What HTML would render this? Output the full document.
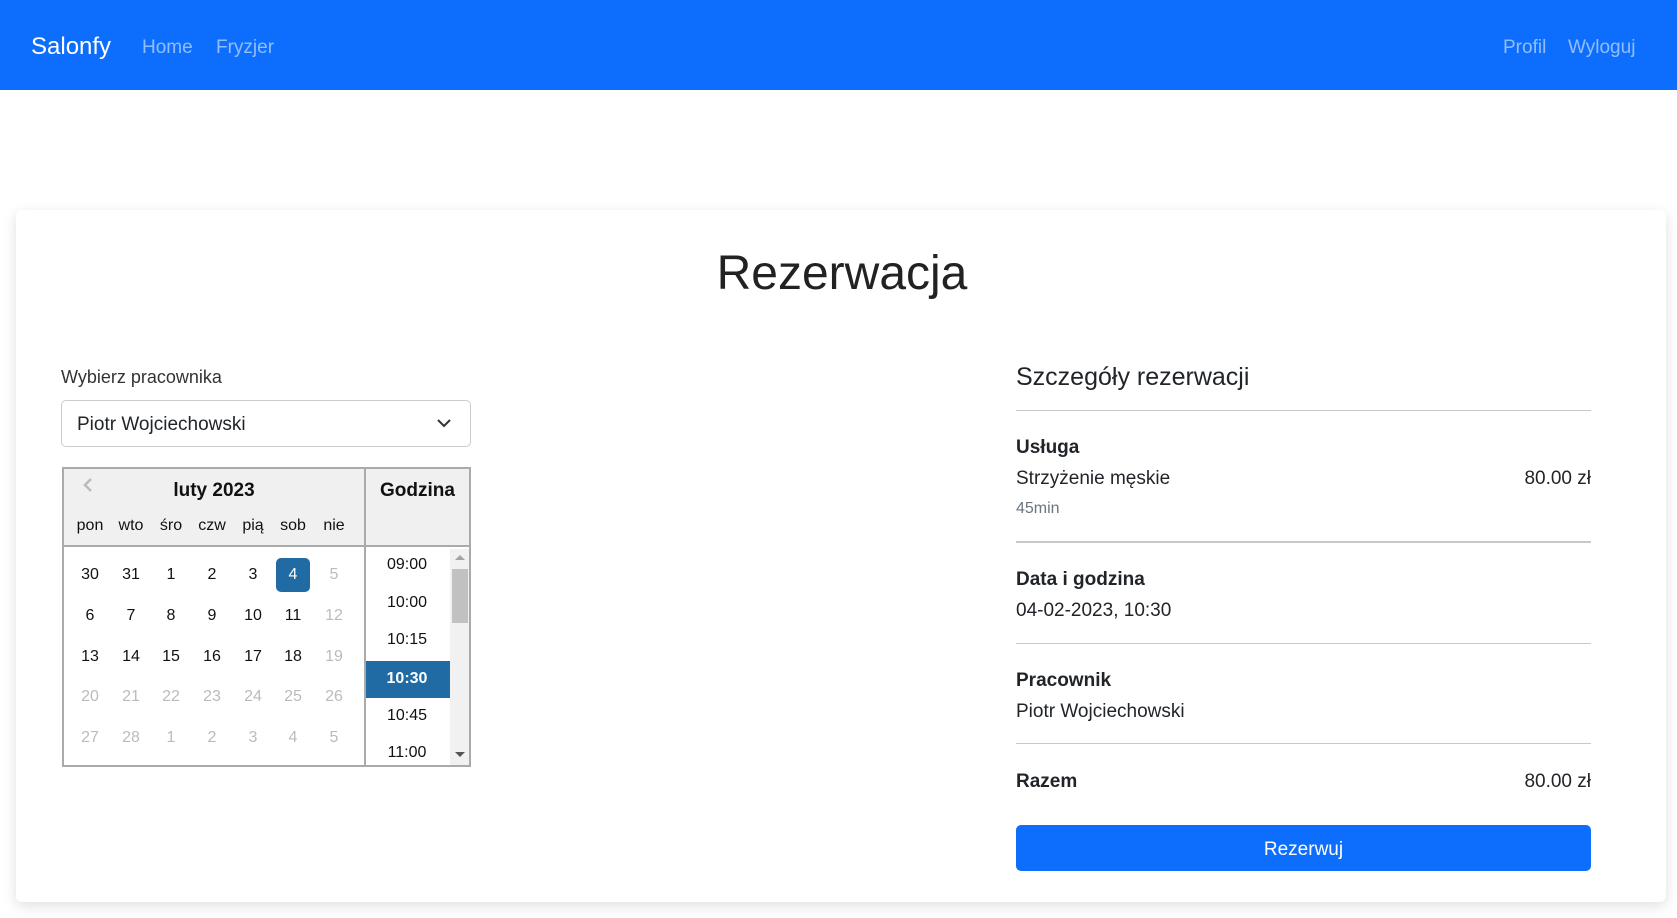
<!DOCTYPE html>
<html><head><meta charset="utf-8"><style>
*{box-sizing:border-box;margin:0;padding:0}
body{width:1677px;height:918px;background:#fff;font-family:"Liberation Sans",Arial,sans-serif;color:#212529;position:relative;overflow:hidden}
.a{position:absolute;white-space:nowrap}
nav{position:absolute;left:0;top:0;width:1677px;height:90px;background:#0d6efd}
.nl{color:rgba(255,255,255,.55);font-size:19px;top:35px;line-height:26px}
.card{position:absolute;left:16px;top:210px;width:1650px;height:692px;background:#fff;border-radius:6px;box-shadow:0 4px 14px rgba(0,0,0,.13)}
.hr{position:absolute;left:1016px;width:575px;height:1px;background:#c8c8c8}
.c{position:absolute;width:40px;text-align:center;font-size:16px;line-height:20px;color:#111}
.g{color:#bbb}
.t{position:absolute;left:364px;width:86px;text-align:center;font-size:16px;line-height:20px;color:#111}
.b{font-weight:bold;font-size:19px}
.r{font-size:19px}
</style></head><body>
<nav>
<div class="a" style="left:31px;top:32px;font-size:24px;color:#fff;line-height:30px">Salonfy</div>
<div class="a nl" style="left:142px">Home</div>
<div class="a nl" style="left:216px">Fryzjer</div>
<div class="a nl" style="left:1503px">Profil</div>
<div class="a nl" style="left:1568px">Wyloguj</div>
</nav>
<div class="card"></div>
<div class="a" style="left:0;width:1684px;text-align:center;top:242px;font-size:48px;line-height:64px;color:#222">Rezerwacja</div>
<div class="a" style="left:61px;top:365px;font-size:18px;line-height:24px;color:#333">Wybierz pracownika</div>
<div class="a" style="left:61px;top:400px;width:410px;height:47px;border:1px solid #ccc;border-radius:5px"></div>
<div class="a" style="left:77px;top:413px;font-size:19px;line-height:24px">Piotr Wojciechowski</div>
<svg class="a" style="left:436px;top:416px" width="16" height="14" viewBox="0 0 16 14"><path d="M2 4l6 6 6-6" fill="none" stroke="#333" stroke-width="2"/></svg>

<div class="a" style="left:62px;top:467px;width:409px;height:300px;border:2px solid #aaa;background:#fff"></div>
<div class="a" style="left:64px;top:469px;width:300px;height:78px;background:#f0f0f0;border-bottom:2px solid #aaa"></div>
<div class="a" style="left:364px;top:467px;width:2px;height:300px;background:#aaa"></div>
<div class="a" style="left:366px;top:469px;width:103px;height:78px;background:#f0f0f0;border-bottom:2px solid #aaa"></div>
<svg class="a" style="left:82px;top:477px" width="12" height="16" viewBox="0 0 12 16"><path d="M9 2L3 8l6 6" fill="none" stroke="#bbb" stroke-width="2.5"/></svg>
<div class="a" style="left:64px;width:300px;text-align:center;top:479px;font-size:19px;font-weight:bold;line-height:24px;color:#111">luty 2023</div>
<div class="a" style="left:366px;width:103px;text-align:center;top:479px;font-size:19px;font-weight:bold;line-height:24px;color:#111">Godzina</div>
<div class="c" style="left:70px;top:516px">pon</div><div class="c" style="left:111px;top:516px">wto</div><div class="c" style="left:151px;top:516px">śro</div><div class="c" style="left:192px;top:516px">czw</div><div class="c" style="left:233px;top:516px">pią</div><div class="c" style="left:273px;top:516px">sob</div><div class="c" style="left:314px;top:516px">nie</div>
<div class="a" style="left:276px;top:558px;width:34px;height:34px;background:#216ba5;border-radius:5px"></div>
<div class="c" style="left:70px;top:565px">30</div><div class="c" style="left:111px;top:565px">31</div><div class="c" style="left:151px;top:565px">1</div><div class="c" style="left:192px;top:565px">2</div><div class="c" style="left:233px;top:565px">3</div><div class="c" style="left:273px;top:565px;color:#fff">4</div><div class="c g" style="left:314px;top:565px">5</div>
<div class="c" style="left:70px;top:606px">6</div><div class="c" style="left:111px;top:606px">7</div><div class="c" style="left:151px;top:606px">8</div><div class="c" style="left:192px;top:606px">9</div><div class="c" style="left:233px;top:606px">10</div><div class="c" style="left:273px;top:606px">11</div><div class="c g" style="left:314px;top:606px">12</div>
<div class="c" style="left:70px;top:647px">13</div><div class="c" style="left:111px;top:647px">14</div><div class="c" style="left:151px;top:647px">15</div><div class="c" style="left:192px;top:647px">16</div><div class="c" style="left:233px;top:647px">17</div><div class="c" style="left:273px;top:647px">18</div><div class="c g" style="left:314px;top:647px">19</div>
<div class="c g" style="left:70px;top:687px">20</div><div class="c g" style="left:111px;top:687px">21</div><div class="c g" style="left:151px;top:687px">22</div><div class="c g" style="left:192px;top:687px">23</div><div class="c g" style="left:233px;top:687px">24</div><div class="c g" style="left:273px;top:687px">25</div><div class="c g" style="left:314px;top:687px">26</div>
<div class="c g" style="left:70px;top:728px">27</div><div class="c g" style="left:111px;top:728px">28</div><div class="c g" style="left:151px;top:728px">1</div><div class="c g" style="left:192px;top:728px">2</div><div class="c g" style="left:233px;top:728px">3</div><div class="c g" style="left:273px;top:728px">4</div><div class="c g" style="left:314px;top:728px">5</div>
<div class="a" style="left:450px;top:549px;width:19px;height:216px;background:#f1f1f1"></div>
<div class="a" style="left:452px;top:569px;width:16px;height:54px;background:#c1c1c1"></div>
<svg class="a" style="left:455px;top:554px" width="10" height="6"><path d="M0 6L5 1 10 6z" fill="#a3a3a3"/></svg>
<svg class="a" style="left:455px;top:752px" width="10" height="6"><path d="M0 0L5 5 10 0z" fill="#555"/></svg>
<div class="a" style="left:366px;top:661px;width:84px;height:37px;background:#216ba5"></div>
<div class="t" style="top:555px">09:00</div><div class="t" style="top:593px">10:00</div><div class="t" style="top:630px">10:15</div><div class="t" style="top:669px;color:#fff;font-weight:bold">10:30</div><div class="t" style="top:706px">10:45</div><div class="t" style="top:743px">11:00</div>

<div class="a" style="left:1016px;top:361px;font-size:25px;line-height:32px">Szczegóły rezerwacji</div>
<div class="hr" style="top:410px"></div>
<div class="a b" style="left:1016px;top:436px;line-height:24px">Usługa</div>
<div class="a r" style="left:1016px;top:467px;line-height:24px">Strzyżenie męskie</div>
<div class="a r" style="left:1524px;top:467px;line-height:24px;width:67px;text-align:right">80.00 zł</div>
<div class="a" style="left:1016px;top:499px;font-size:16px;line-height:20px;color:#6c757d">45min</div>
<div class="hr" style="top:541px;height:2px"></div>
<div class="a b" style="left:1016px;top:568px;line-height:24px">Data i godzina</div>
<div class="a r" style="left:1016px;top:599px;line-height:24px">04-02-2023, 10:30</div>
<div class="hr" style="top:643px"></div>
<div class="a b" style="left:1016px;top:669px;line-height:24px">Pracownik</div>
<div class="a r" style="left:1016px;top:700px;line-height:24px">Piotr Wojciechowski</div>
<div class="hr" style="top:743px"></div>
<div class="a b" style="left:1016px;top:770px;line-height:24px">Razem</div>
<div class="a r" style="left:1524px;top:770px;line-height:24px;width:67px;text-align:right">80.00 zł</div>
<div class="a" style="left:1016px;top:825px;width:575px;height:46px;background:#0d6efd;border-radius:5px;color:#fff;font-size:19px;line-height:50px;text-align:center">Rezerwuj</div>
</body></html>
